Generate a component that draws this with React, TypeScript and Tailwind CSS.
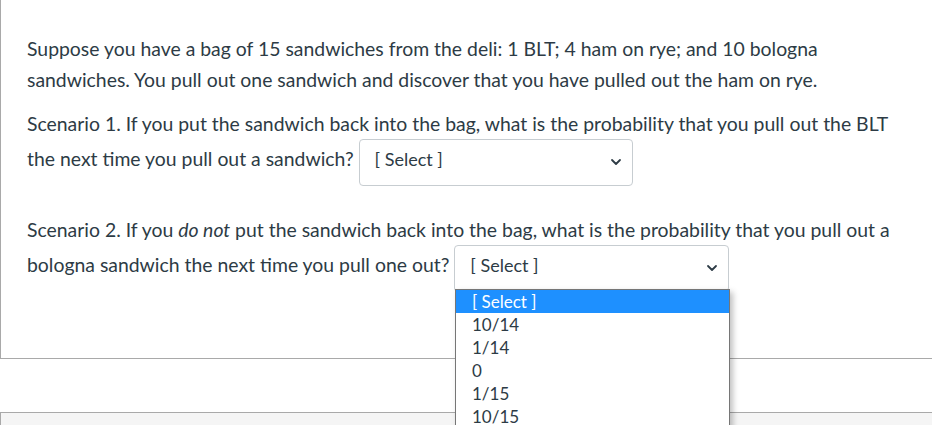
import React from 'react';

const options = ['[ Select ]', '10/14', '1/14', '0', '1/15', '10/15'];

function FakeSelect({ width }: { width: string }) {
  return (
    <span
      className={`inline-flex items-center justify-between align-baseline h-[47px] ${width} border border-[#c7cdd1] rounded-[4px] bg-white pl-[15px] pr-[10px] text-[18px] text-[#2d3b45]`}
    >
      <span className="-mt-[6px]">[ Select ]</span>
      <svg width="12" height="12" viewBox="0 0 12 12" className="-mt-[2px]">
        <path d="M2 4 L6 8 L10 4" fill="none" stroke="#2d3b45" strokeWidth="1.8" strokeLinecap="round" strokeLinejoin="round" />
      </svg>
    </span>
  );
}

export default function App() {
  return (
    <div className="relative w-[932px] h-[425px] overflow-hidden bg-white text-[#2d3b45] font-['Lato','Noto_Sans',sans-serif]">
      {/* question card */}
      <div className="border-l border-b border-[#a9a9a9] pl-[26px] pr-[30px] pt-[33px] pb-[66px] text-[19.4px] leading-[31px]">
        <p>
          Suppose you have a bag of 15 sandwiches from the deli: 1 BLT; 4 ham on rye; and 10 bologna
          sandwiches. You pull out one sandwich and discover that you have pulled out the ham on rye.
        </p>
        <p className="mt-[13px]">
          Scenario 1. If you put the sandwich back into the bag, what is the probability that you pull out the BLT
          the next time you pull out a sandwich?{' '}
          <FakeSelect width="w-[274px]" />
        </p>
        <p className="mt-[28px]">
          Scenario 2. If you <em>do not</em> put the sandwich back into the bag, what is the probability that you pull out a
          bologna sandwich the next time you pull one out?{' '}
          <FakeSelect width="w-[275px]" />
        </p>
      </div>

      {/* next card */}
      <div className="mt-[53px] h-[40px] border-l border-t border-[#a9a9a9] bg-[#f5f5f5]" />

      {/* open dropdown list */}
      <div className="absolute left-[455px] top-[289px] w-[275px] bg-white border border-[#767676] shadow-[3px_3px_6px_rgba(0,0,0,0.25)] text-[17px] leading-[23px]">
        {options.map((o, i) => (
          <div
            key={o}
            className={`h-[23px] pl-[16px] ${i === 0 ? 'bg-[#1e90ff] text-white' : 'text-[#2d3b45]'}`}
          >
            {o}
          </div>
        ))}
      </div>
    </div>
  );
}
